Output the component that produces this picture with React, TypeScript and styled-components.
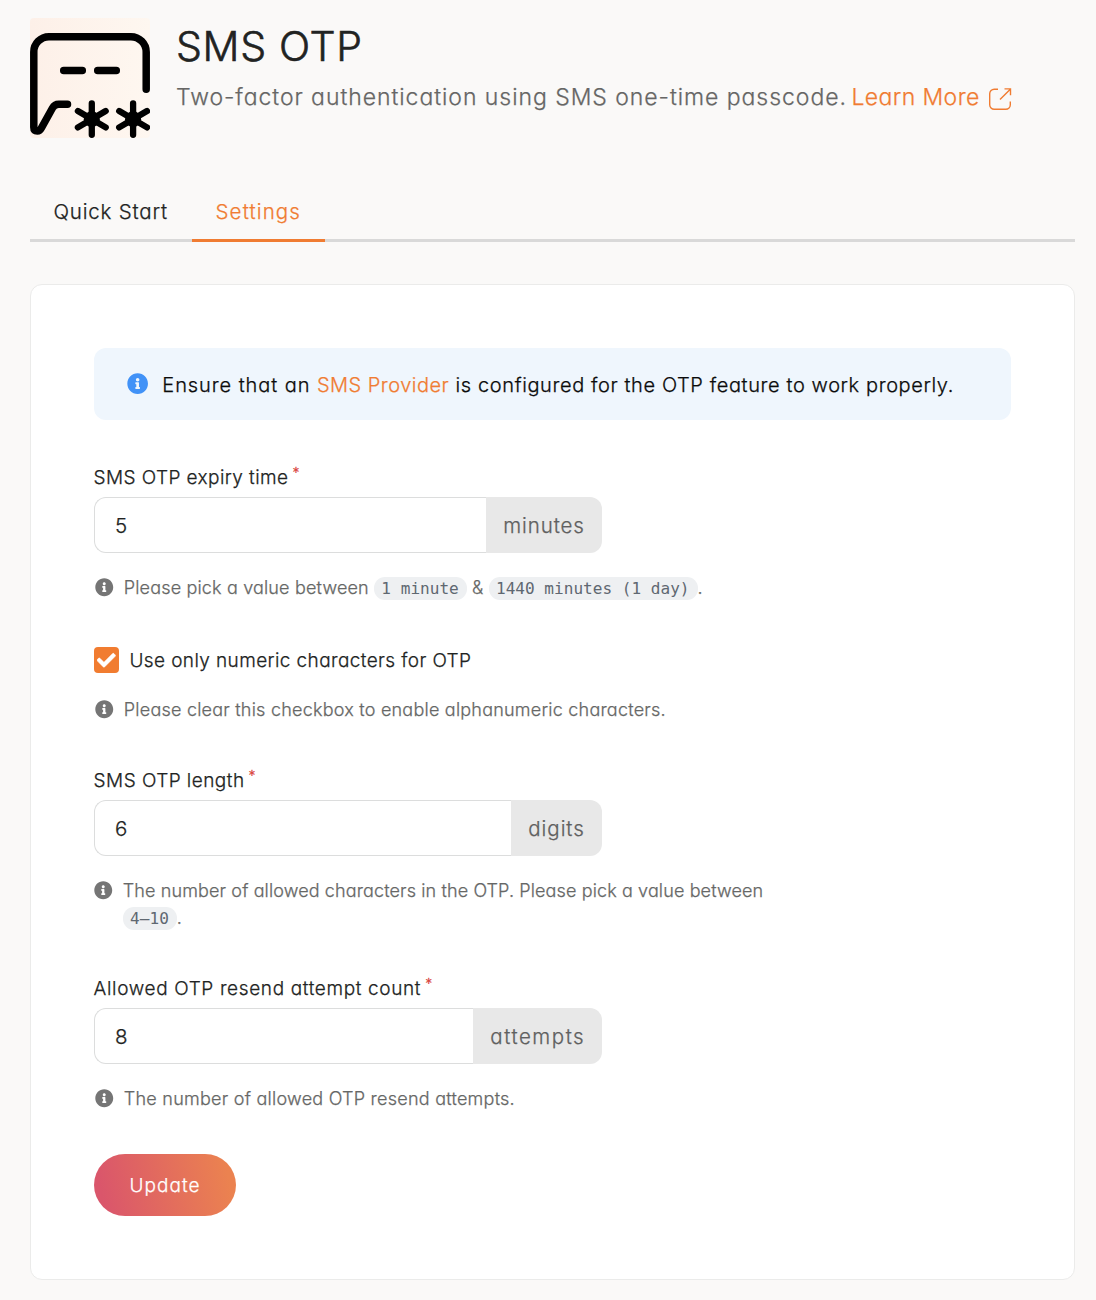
import React, { useState } from 'react';
import styled, { createGlobalStyle } from 'styled-components';
import { FaCheck, FaInfoCircle } from 'react-icons/fa';

const GlobalStyle = createGlobalStyle`
  *, *::before, *::after { box-sizing: border-box; }
  body {
    margin: 0;
    background: #faf9f8;
    color: #212322;
    font-family: Inter, "Open Sans", sans-serif;
    font-weight: 300;
    font-feature-settings: "cv11";
    -webkit-text-stroke: 0.25px currentColor;
  }
`;

const Page = styled.main`
  padding: 18px 21px 20px 30px;
  width: 1096px;
`;

const Header = styled.header`
  display: flex;
  gap: 26px;
  height: 120px;
`;

const Logo = styled.svg`
  flex: none;
  width: 120px;
  height: 120px;
  border-radius: 4px;
  background: linear-gradient(90deg, #fdf0e8, #fef7f0);
`;

const Title = styled.h1`
  margin: 0;
  font-size: 41px;
  font-weight: 300;
  line-height: 56px;
  letter-spacing: 0.7px;
  -webkit-text-stroke-width: 0.6px;
`;

const Subtitle = styled.p`
  display: flex;
  margin: 6px 0 0;
  font-size: 23px;
  line-height: 34px;
  letter-spacing: 0.95px;
  white-space: nowrap;
  color: #666665;
`;

const Link = styled.a<{ $spacing?: number }>`
  color: #f07c32;
  text-decoration: none;
  letter-spacing: ${({ $spacing = 0.5 }) => $spacing}px;
`;

const LearnMore = styled(Link)`
  display: flex;
  margin-left: 4.5px;
`;

const ExternalIcon = styled.svg`
  width: 24px;
  height: 24px;
  margin: 7px 0 0 8px;
`;

const Tabs = styled.nav`
  display: flex;
  margin-top: 46px;
  height: 58px;
  box-shadow: inset 0 -3px #d9d9d9;
`;

const Tab = styled.button<{ $active?: boolean; $width: number; $spacing: number }>`
  width: ${({ $width }) => $width}px;
  padding: 0 0 0 23.5px;
  border: 0;
  border-bottom: 3px solid ${({ $active }) => ($active ? '#f07c32' : 'transparent')};
  background: none;
  color: ${({ $active }) => ($active ? '#f07c32' : '#212322')};
  font: inherit;
  font-size: 20.5px;
  letter-spacing: ${({ $spacing }) => $spacing}px;
  text-align: left;
`;

const Card = styled.section`
  height: 996px;
  margin-top: 42px;
  padding: 63px;
  border: 1px solid #ebebea;
  border-radius: 12px;
  background: #fff;
`;

const Alert = styled.div`
  display: flex;
  align-items: center;
  gap: 14px;
  height: 72px;
  padding-left: 33px;
  border-radius: 12px;
  background: #eff6fd;
  color: #0b0b0b;
  font-size: 20px;
  line-height: 26px;
  white-space: nowrap;

  svg { color: #4192f7; }
  div { padding-top: 2px; }
`;

const AlertText = styled.span<{ $spacing: number }>`
  letter-spacing: ${({ $spacing }) => $spacing}px;
`;

const Label = styled.label<{ $top: number; $spacing: number }>`
  display: block;
  margin: ${({ $top }) => $top}px 0 5px -0.4px;
  font-size: 19px;
  line-height: 28px;
  letter-spacing: ${({ $spacing }) => $spacing}px;
`;

const Required = styled.span`
  margin-left: 4px;
  color: #d9443c;
  font-size: 14px;
  line-height: 0;
  vertical-align: 6px;
  -webkit-text-stroke-width: 0.3px;
`;

const InputGroup = styled.div`
  display: flex;
  width: 508px;
  height: 56px;
`;

const Input = styled.input`
  flex: 1;
  min-width: 0;
  padding: 1px 0 0 20px;
  border: 1px solid #dcdddd;
  border-right: 0;
  border-radius: 12px 0 0 12px;
  outline: none;
  background: #fff;
  color: #212322;
  font: inherit;
  font-size: 20.5px;
`;

const Unit = styled.span<{ $width: number; $spacing: number }>`
  display: flex;
  align-items: center;
  width: ${({ $width }) => $width}px;
  padding-left: 17.3px;
  border-radius: 0 12px 12px 0;
  background: #e8e8e8;
  color: #5f605f;
  font-size: 20.5px;
  letter-spacing: ${({ $spacing }) => $spacing}px;
`;

const HintRow = styled.div<{ $top?: number; $indent?: number; $spacing: number }>`
  display: flex;
  gap: 10.3px;
  max-width: 690px;
  margin-top: ${({ $top = 21 }) => $top}px;
  padding-left: ${({ $indent = 1 }) => $indent}px;
  color: #666766;
  font-size: 18px;
  line-height: 27.4px;
  letter-spacing: ${({ $spacing }) => $spacing}px;

  svg { flex: none; margin-top: 4px; color: #757575; }
`;

const Code = styled.code`
  padding: 2px 8px 2px 7.3px;
  border-radius: 11px;
  background: #eef0f2;
  color: #5f6871;
  font-family: "DejaVu Sans Mono", monospace;
  font-size: 16.08px;
  line-height: 0;
  letter-spacing: 0;
  -webkit-text-stroke-width: 0;
`;

const CheckRow = styled.label`
  display: flex;
  align-items: center;
  gap: 10.4px;
  height: 26px;
  margin-top: 45.6px;
  font-size: 19px;
  letter-spacing: 0.4px;
`;

const CheckBox = styled.span`
  display: flex;
  align-items: center;
  justify-content: center;
  width: 25px;
  height: 26px;
  border-radius: 4px;
  background: #f17c30;
  color: #fff;

  svg { stroke: #fff; stroke-width: 16px; }
`;

const HiddenCheck = styled.input`
  display: none;
`;

const UpdateButton = styled.button`
  display: block;
  width: 142px;
  height: 62px;
  margin-top: 41.6px;
  padding: 0;
  border: 0;
  border-radius: 31px;
  background: linear-gradient(78deg, #da566b 8%, #eb8250 92%);
  color: #fff;
  font: inherit;
  font-size: 19px;
  letter-spacing: 1px;
`;

const Hint = ({ children, ...rest }: {
  children: React.ReactNode; $top?: number; $indent?: number; $spacing: number;
}) => (
  <HintRow {...rest}>
    <FaInfoCircle size={18.5} />
    <div>{children}</div>
  </HintRow>
);

interface FieldProps {
  label: string;
  initial: string;
  unit: string;
  top: number;
  labelSpacing: number;
  unitWidth: number;
  unitSpacing: number;
}

function Field({ label, initial, unit, top, labelSpacing, unitWidth, unitSpacing }: FieldProps) {
  const [value, setValue] = useState(initial);
  return (
    <>
      <Label $top={top} $spacing={labelSpacing}>
        {label}
        <Required>*</Required>
      </Label>
      <InputGroup>
        <Input value={value} onChange={(e) => setValue(e.target.value)} />
        <Unit $width={unitWidth} $spacing={unitSpacing}>{unit}</Unit>
      </InputGroup>
    </>
  );
}

export default function App() {
  const [numeric, setNumeric] = useState(true);
  return (
    <Page>
      <GlobalStyle />
      <Header>
        <Logo viewBox="0 0 120 120" fill="none" stroke="#000" strokeLinecap="round">
          <path
            d="M116.2 71.3V34a15.3 15.3 0 0 0-15.3-15.3H19A15.3 15.3 0 0 0 3.8 34v75.3q0 3.7 3.6 3.7c2.2 0 3.2-1.5 4-3L22.5 90q2-3.7 6.3-3.7h8.7"
            strokeWidth="7.5"
          />
          <path d="M33.7 52.4h18.6M67.7 52.4h18.6" strokeWidth="7.5" />
          <path
            d="M61.8 85.3v31.5M47.9 93l27.8 16.4M75.7 93l-27.8 16.4M103.1 85.3v31.5M89.2 93l27.8 16.4M117 93l-27.8 16.4"
            strokeWidth="6.3"
          />
          <circle cx="61.8" cy="101.2" r="8" fill="#000" stroke="none" />
          <circle cx="103.1" cy="101.2" r="8" fill="#000" stroke="none" />
        </Logo>
        <div>
          <Title>SMS OTP</Title>
          <Subtitle>
            Two-factor authentication using SMS one-time passcode.
            <LearnMore $spacing={0.4}>
              Learn More
              <ExternalIcon viewBox="0 0 24 24" fill="none" stroke="#f07c32" strokeWidth="1.4">
                <path d="M10 2.2H6.2a4.5 4.5 0 0 0-4.5 4.5v11.1a4.5 4.5 0 0 0 4.5 4.5h11.6a4.5 4.5 0 0 0 4.5-4.5V14.5" />
                <path d="M12 12.5 22.3 2.2M16.5 1.9h6v6.3" />
              </ExternalIcon>
            </LearnMore>
          </Subtitle>
        </div>
      </Header>

      <Tabs>
        <Tab $width={162} $spacing={0.8}>Quick Start</Tab>
        <Tab $width={133} $spacing={1.15} $active>Settings</Tab>
      </Tabs>

      <Card>
        <Alert>
          <FaInfoCircle size={21.3} />
          <div>
            <AlertText $spacing={0.93}>Ensure that an </AlertText>
            <Link>SMS Provider</Link>
            <AlertText $spacing={0.61}> is configured for the OTP feature to work properly.</AlertText>
          </div>
        </Alert>

        <Field label="SMS OTP expiry time" initial="5" unit="minutes" top={44} labelSpacing={0.42} unitWidth={116} unitSpacing={0.9} />
        <Hint $spacing={0.16}>
          Please pick a value between <Code>1 minute</Code> &amp; <Code>1440 minutes (1 day)</Code>.
        </Hint>

        <CheckRow>
          <HiddenCheck type="checkbox" checked={numeric} onChange={() => setNumeric(!numeric)} />
          <CheckBox>{numeric && <FaCheck size={18.5} />}</CheckBox>
          Use only numeric characters for OTP
        </CheckRow>
        <Hint $top={23} $spacing={0.22}>Please clear this checkbox to enable alphanumeric characters.</Hint>

        <Field label="SMS OTP length" initial="6" unit="digits" top={43.6} labelSpacing={0.46} unitWidth={91} unitSpacing={0.95} />
        <Hint $indent={0} $spacing={0.12}>
          The number of allowed characters in the OTP. Please pick a value between <Code>4–10</Code>.
        </Hint>

        <Field label="Allowed OTP resend attempt count" initial="8" unit="attempts" top={43.2} labelSpacing={0.64} unitWidth={129} unitSpacing={1.55} />
        <Hint $spacing={0.25}>The number of allowed OTP resend attempts.</Hint>

        <UpdateButton>Update</UpdateButton>
      </Card>
    </Page>
  );
}
